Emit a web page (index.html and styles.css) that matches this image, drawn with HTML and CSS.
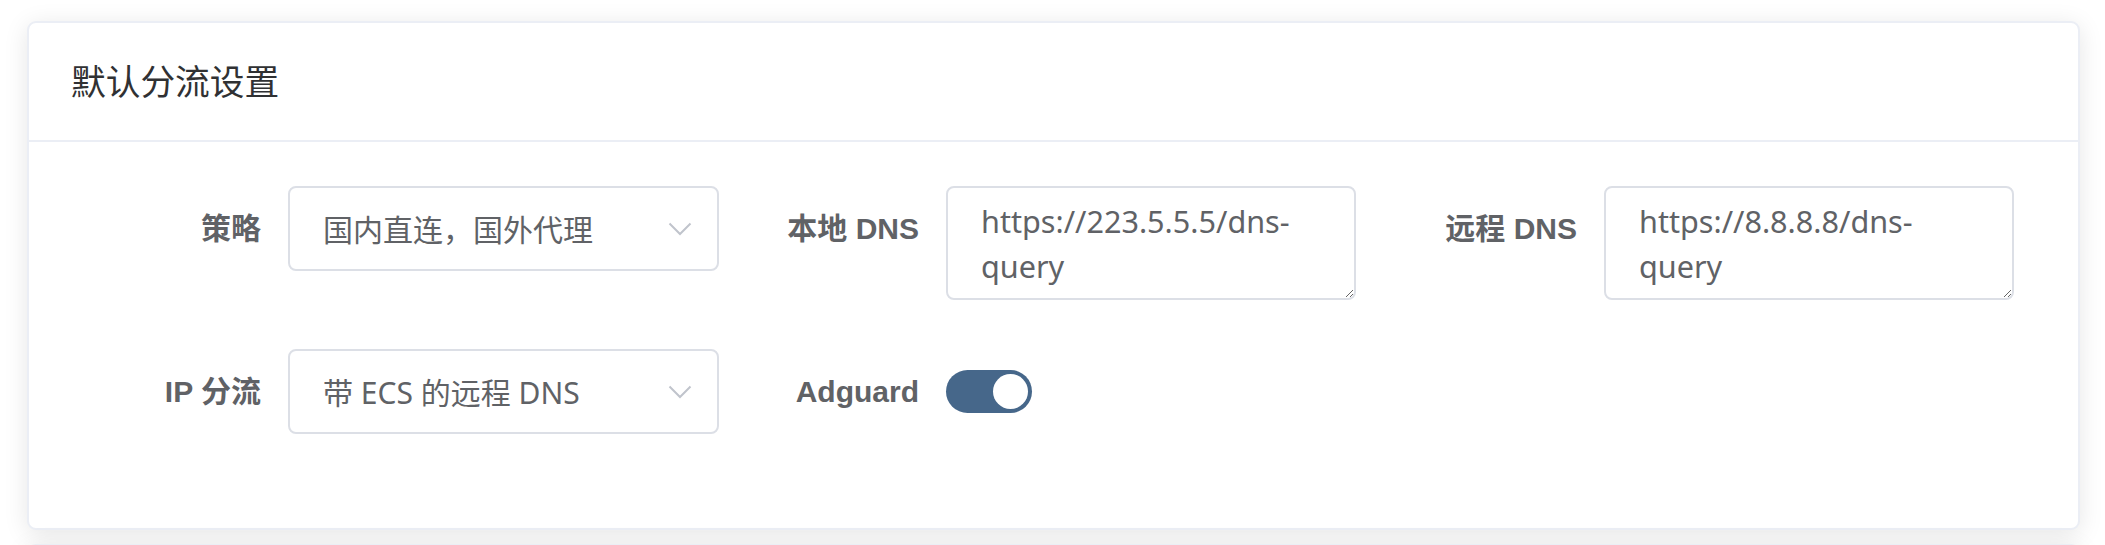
FILE: index.html
```html
<!DOCTYPE html>
<html lang="zh-CN">
<head>
<meta charset="utf-8">
<title>默认分流设置</title>
<link rel="stylesheet" href="styles.css">
</head>
<body>
<div class="page">
  <section class="card">
    <header class="card-header">
      <h2 class="card-title">默认分流设置</h2>
    </header>
    <div class="card-body">
      <form class="form-grid">
        <div class="form-item">
          <label class="form-label">策略</label>
          <div class="form-content">
            <div class="select">
              <span class="select-value">国内直连，国外代理</span>
              <svg class="select-arrow" width="24" height="14" viewBox="0 0 24 14"><polyline points="1.5,1.5 12,12 22.5,1.5" fill="none" stroke="#c0c4cc" stroke-width="2"/></svg>
            </div>
          </div>
        </div>
        <div class="form-item">
          <label class="form-label">本地 DNS</label>
          <div class="form-content">
            <textarea class="textarea" rows="2">https://223.5.5.5/dns-query</textarea>
          </div>
        </div>
        <div class="form-item">
          <label class="form-label">远程 DNS</label>
          <div class="form-content">
            <textarea class="textarea" rows="2">https://8.8.8.8/dns-query</textarea>
          </div>
        </div>
        <div class="form-item">
          <label class="form-label">IP 分流</label>
          <div class="form-content">
            <div class="select">
              <span class="select-value">带 ECS 的远程 DNS</span>
              <svg class="select-arrow" width="24" height="14" viewBox="0 0 24 14"><polyline points="1.5,1.5 12,12 22.5,1.5" fill="none" stroke="#c0c4cc" stroke-width="2"/></svg>
            </div>
          </div>
        </div>
        <div class="form-item">
          <label class="form-label">Adguard</label>
          <div class="form-content">
            <span class="switch is-on"><span class="switch-knob"></span></span>
          </div>
        </div>
      </form>
    </div>
  </section>
  <section class="card card-next"></section>
</div>
</body>
</html>
```
FILE: styles.css
```css
html, body {
  margin: 0;
  padding: 0;
  background: #ffffff;
}

body {
  font-family: "Noto Sans", "Noto Sans CJK SC", sans-serif;
  color: #606266;
  overflow: hidden;
}

.page {
  padding: 21px 25px 0 27px;
  display: flex;
  flex-direction: column;
  gap: 14px;
}

.card {
  background: #ffffff;
  border: 2px solid #ebeef5;
  border-radius: 9px;
  box-shadow: 0 4px 25px rgba(0, 0, 0, 0.1);
}

.card-next {
  height: 200px;
}

.card-header {
  height: 117px;
  border-bottom: 2px solid #ebeef5;
  display: flex;
  align-items: center;
  padding: 0 42px;
}

.card-title {
  margin: 0;
  font-family: "Noto Sans CJK SC", sans-serif;
  font-size: 34.7px;
  font-weight: 400;
  color: #303133;
  line-height: 1;
  position: relative;
  top: -1px;
}

.card-body {
  padding: 44px 37.5px 45px;
}

.form-grid {
  display: grid;
  grid-template-columns: repeat(3, 1fr);
  margin: 0;
}

.form-item {
  display: flex;
  align-items: flex-start;
  margin-bottom: 49px;
}

.form-label {
  width: 221.5px;
  flex: none;
  box-sizing: border-box;
  padding-right: 27px;
  text-align: right;
  font-family: "Liberation Sans", "Noto Sans CJK SC", sans-serif;
  font-weight: 700;
  font-size: 30px;
  line-height: 85px;
  color: #606266;
}

.form-content {
  display: flex;
  align-items: center;
  min-height: 85px;
}

.select {
  width: 431px;
  height: 85px;
  box-sizing: border-box;
  border: 2px solid #dcdfe6;
  border-radius: 8px;
  display: flex;
  align-items: center;
  justify-content: space-between;
  padding: 0 25px 0 33px;
  font-size: 30px;
  color: #606266;
}

.select-value {
  line-height: 1;
  position: relative;
  top: 1px;
}

.select-arrow {
  display: block;
  flex: none;
}

.textarea {
  display: block;
  width: 410px;
  height: 114px;
  box-sizing: border-box;
  border: 2px solid #dcdfe6;
  border-radius: 8px;
  padding: 11px 33px 8px;
  font-family: "Noto Sans", "Noto Sans CJK SC", sans-serif;
  font-size: 30.6px;
  line-height: 44.5px;
  color: #606266;
  resize: vertical;
  overflow: hidden;
  outline: none;
  margin: 0;
}

.switch {
  width: 86px;
  height: 43px;
  box-sizing: border-box;
  border-radius: 22px;
  background: #46678a;
  padding: 4px;
  display: flex;
  justify-content: flex-end;
}

.switch-knob {
  display: block;
  width: 35px;
  height: 35px;
  border-radius: 50%;
  background: #ffffff;
}
```
